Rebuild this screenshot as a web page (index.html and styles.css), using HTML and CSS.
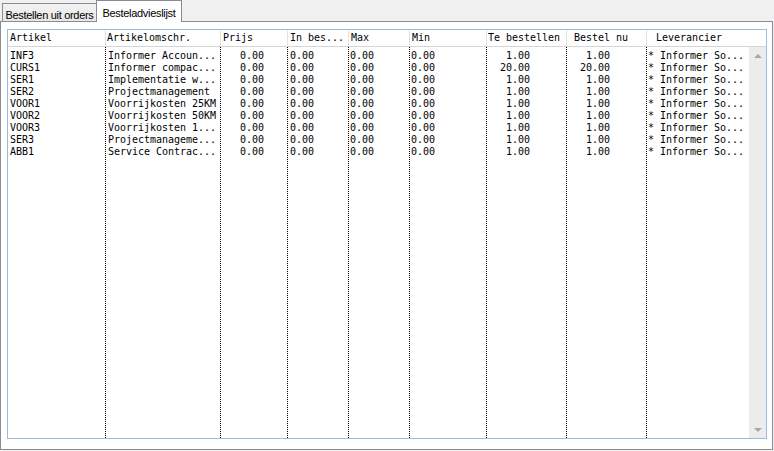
FILE: index.html
```html
<!DOCTYPE html>
<html>
<head>
<meta charset="utf-8">
<link rel="stylesheet" href="styles.css">
</head>
<body>
<div class="tabs">
  <div class="tab inactive">Bestellen uit orders</div>
  <div class="tab active">Besteladvieslijst</div>
</div>
<div class="panel">
  <div class="grid">
    <div class="hd c1">Artikel</div>
    <div class="hd c2 sep">Artikelomschr.</div>
    <div class="hd c3 sep">Prijs</div>
    <div class="hd c4 sep">In bes...</div>
    <div class="hd c5 sep">Max</div>
    <div class="hd c6 sep">Min</div>
    <div class="hd c7 sep">Te bestellen</div>
    <div class="hd c8 sep">Bestel nu</div>
    <div class="hd c9 sep span2">Leverancier</div>

    <div class="bd b1"><div>INF3</div><div>CURS1</div><div>SER1</div><div>SER2</div><div>VOOR1</div><div>VOOR2</div><div>VOOR3</div><div>SER3</div><div>ABB1</div></div>
    <div class="bd b2 dot"><div>Informer Accoun...</div><div>Informer compac...</div><div>Implementatie w...</div><div>Projectmanagement</div><div>Voorrijkosten 25KM</div><div>Voorrijkosten 50KM</div><div>Voorrijkosten 1...</div><div>Projectmanageme...</div><div>Service Contrac...</div></div>
    <div class="bd b3 dot"><div>0.00</div><div>0.00</div><div>0.00</div><div>0.00</div><div>0.00</div><div>0.00</div><div>0.00</div><div>0.00</div><div>0.00</div></div>
    <div class="bd b4 dot"><div>0.00</div><div>0.00</div><div>0.00</div><div>0.00</div><div>0.00</div><div>0.00</div><div>0.00</div><div>0.00</div><div>0.00</div></div>
    <div class="bd b5 dot"><div>0.00</div><div>0.00</div><div>0.00</div><div>0.00</div><div>0.00</div><div>0.00</div><div>0.00</div><div>0.00</div><div>0.00</div></div>
    <div class="bd b6 dot"><div>0.00</div><div>0.00</div><div>0.00</div><div>0.00</div><div>0.00</div><div>0.00</div><div>0.00</div><div>0.00</div><div>0.00</div></div>
    <div class="bd b7 dot"><div>1.00</div><div>20.00</div><div>1.00</div><div>1.00</div><div>1.00</div><div>1.00</div><div>1.00</div><div>1.00</div><div>1.00</div></div>
    <div class="bd b8 dot"><div>1.00</div><div>20.00</div><div>1.00</div><div>1.00</div><div>1.00</div><div>1.00</div><div>1.00</div><div>1.00</div><div>1.00</div></div>
    <div class="bd b9 dot"><div>* Informer So...</div><div>* Informer So...</div><div>* Informer So...</div><div>* Informer So...</div><div>* Informer So...</div><div>* Informer So...</div><div>* Informer So...</div><div>* Informer So...</div><div>* Informer So...</div></div>
    <div class="scroll">
      <span class="arrow up"></span>
      <span class="arrow down"></span>
    </div>
  </div>
</div>
</body>
</html>
```
FILE: styles.css
```css
* { box-sizing: border-box; }
html, body { margin: 0; padding: 0; }
body {
  background: #f0f0f0;
  width: 774px;
  height: 451px;
  overflow: hidden;
  font-family: "Liberation Sans", Arial, sans-serif;
}
.tabs {
  display: flex;
  height: 22px;
  margin-bottom: -1px;
  padding-left: 2px;
  align-items: flex-start;
}
.tab {
  font-size: 11px;
  letter-spacing: -0.3px;
  line-height: 13px;
  color: #000;
  text-align: center;
  border: 1px solid #898c95;
  border-bottom: none;
  white-space: nowrap;
}
.inactive {
  margin-top: 3px;
  width: 94px;
  height: 18px;
  border-right: none;
  padding-top: 5px;
  background: linear-gradient(#f3f3f3, #e6e6e6);
}
.active {
  width: 86px;
  height: 22px;
  padding-top: 6px;
  background: #fff;
  z-index: 1;
}
.panel {
  width: 773px;
  height: 429px;
  border: 1px solid #898c95;
  background: #fff;
  padding: 7px 5px 10px 6px;
}
.grid {
  width: 760px;
  height: 410px;
  border: 1px solid #9db9e6;
  display: grid;
  grid-template-columns: 97px 115px 67px 61px 61px 77px 80px 80px 103px 17px;
  grid-template-rows: 17px 1fr;
  font-family: "DejaVu Sans Mono", monospace;
  font-size: 10px;
  letter-spacing: -0.02px;
  color: #000;
}
.hd {
  height: 17px;
  line-height: 16px;
  border-bottom: 1px solid #d5d5d5;
  white-space: pre;
  overflow: hidden;
  background: #fff;
}
.sep { border-left: 1px solid #e2e2e2; }
.span2 { grid-column: span 2; }
.c1 { padding-left: 2px; }
.c2 { padding-left: 1px; }
.c3 { padding-left: 2px; }
.c4 { padding-left: 2px; }
.c5 { padding-left: 2px; }
.c6 { padding-left: 2px; }
.c7 { padding-left: 1px; }
.c8 { padding-left: 7px; }
.c9 { padding-left: 9px; }

.bd {
  padding-top: 3px;
  line-height: 12px;
  white-space: pre;
  overflow: hidden;
}
.dot { border-left: 1px dotted #000; }
.b1 { padding-left: 2px; }
.b2 { padding-left: 2px; }
.b3 { text-align: right; padding-right: 23px; }
.b4 { padding-left: 2px; }
.b5 { padding-left: 1px; }
.b6 { padding-left: 1px; }
.b7 { text-align: right; padding-right: 36px; }
.b8 { text-align: right; padding-right: 36px; }
.b9 { padding-left: 1px; }

.scroll {
  background: #ececec;
  display: flex;
  flex-direction: column;
  justify-content: space-between;
  align-items: center;
  padding: 7px 0 6px 1px;
}
.arrow {
  width: 0;
  height: 0;
  border-left: 4px solid transparent;
  border-right: 4px solid transparent;
}
.up { border-bottom: 4px solid #a8a8a8; }
.down { border-top: 4px solid #a8a8a8; }
```
